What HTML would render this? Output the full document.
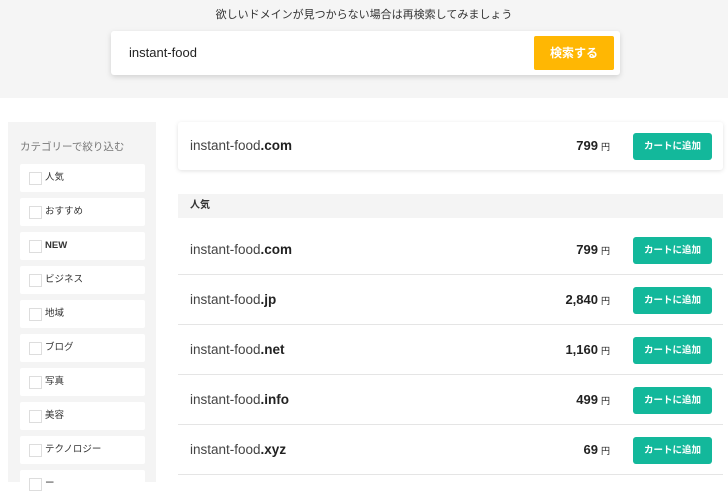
<!DOCTYPE html>
<html><head><meta charset="utf-8"><style>
*{margin:0;padding:0;box-sizing:border-box}
body{width:728px;height:480px;overflow:hidden;background:#fff;font-family:"Liberation Sans","Noto Sans CJK JP",sans-serif;color:#333;position:relative}
.top{position:absolute;left:0;top:0;width:728px;height:98px;background:#f5f5f5}
.msg{position:absolute;top:6px;width:728px;text-align:center;font-size:11px;color:#333}
.sb{position:absolute;left:111px;top:31px;width:509px;height:44px;background:#fff;border-radius:3px;box-shadow:0 2px 6px rgba(0,0,0,.15)}
.sb span{position:absolute;left:18px;top:14px;font-size:13px;color:#222}
.sbtn{position:absolute;left:423px;top:5px;width:80px;height:34px;background:#ffb703;border-radius:2px;color:#fff;font-weight:bold;font-size:12px;text-align:center;line-height:34px}
.side{position:absolute;left:8px;top:122px;width:148px;height:360px;background:#f4f4f4}
.side h4{position:absolute;left:12px;top:17px;font-size:10.5px;font-weight:normal;color:#777}
.it{position:absolute;left:12px;width:125px;height:28px;background:#fff;border-radius:2px;font-size:9.5px;color:#333;line-height:28px;padding-left:25px}
.it:before{content:"";position:absolute;left:9px;top:8px;width:11px;height:11px;border:1px solid #ddd;background:#fff}
.card{position:absolute;left:178px;top:122px;width:545px;height:48px;background:#fff;border-radius:3px;box-shadow:0 1px 4px rgba(0,0,0,.12)}
.hdr{position:absolute;left:178px;top:194px;width:545px;height:24px;background:#f4f4f4;font-size:10px;font-weight:bold;line-height:24px;padding-left:12px}
.row{position:absolute;left:178px;width:545px;height:50px;border-bottom:1px solid #e5e5e5}
.dn{position:absolute;left:12px;font-size:13.5px;color:#444}
.dn b{color:#222}
.pr{position:absolute;right:113px;font-size:13px;font-weight:bold;color:#222}
.pr small{font-size:9px;font-weight:normal;margin-left:3px}
.btn{position:absolute;left:455px;width:79px;height:27px;background:#13b89b;border-radius:3px;color:#fff;font-size:9.5px;font-weight:bold;text-align:center;line-height:27px}
</style></head><body>
<div class="top"><div class="msg">欲しいドメインが見つからない場合は再検索してみましょう</div>
<div class="sb"><span>instant-food</span><div class="sbtn">検索する</div></div></div>
<div class="side"><h4>カテゴリーで絞り込む</h4>
<div class="it" style="top:42px">人気</div>
<div class="it" style="top:76px">おすすめ</div>
<div class="it" style="top:110px;font-weight:bold">NEW</div>
<div class="it" style="top:144px">ビジネス</div>
<div class="it" style="top:178px">地域</div>
<div class="it" style="top:212px">ブログ</div>
<div class="it" style="top:246px">写真</div>
<div class="it" style="top:280px">美容</div>
<div class="it" style="top:314px">テクノロジー</div>
<div class="it" style="top:348px">ー</div>
</div>
<div class="card"><span class="dn" style="top:16px">instant-food<b>.com</b></span><span class="pr" style="top:16px">799<small>円</small></span><div class="btn" style="top:11px">カートに追加</div></div>
<div class="hdr">人気</div>
<div class="row" style="top:225px"><span class="dn" style="top:17px">instant-food<b>.com</b></span><span class="pr" style="top:17px">799<small>円</small></span><div class="btn" style="top:12px">カートに追加</div></div>
<div class="row" style="top:275px"><span class="dn" style="top:17px">instant-food<b>.jp</b></span><span class="pr" style="top:17px">2,840<small>円</small></span><div class="btn" style="top:12px">カートに追加</div></div>
<div class="row" style="top:325px"><span class="dn" style="top:17px">instant-food<b>.net</b></span><span class="pr" style="top:17px">1,160<small>円</small></span><div class="btn" style="top:12px">カートに追加</div></div>
<div class="row" style="top:375px"><span class="dn" style="top:17px">instant-food<b>.info</b></span><span class="pr" style="top:17px">499<small>円</small></span><div class="btn" style="top:12px">カートに追加</div></div>
<div class="row" style="top:425px"><span class="dn" style="top:17px">instant-food<b>.xyz</b></span><span class="pr" style="top:17px">69<small>円</small></span><div class="btn" style="top:12px">カートに追加</div></div>
</body></html>
